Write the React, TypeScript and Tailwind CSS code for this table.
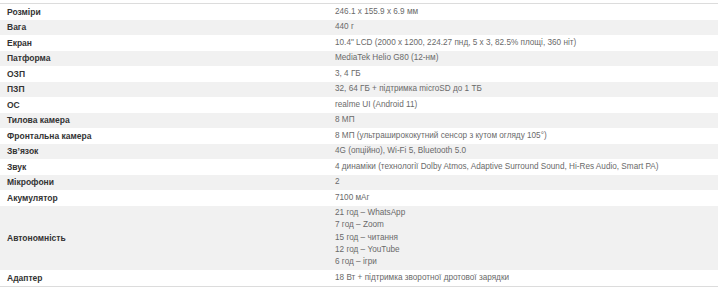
const specs: { label: string; value: string[] }[] = [
  { label: 'Розміри', value: ['246.1 x 155.9 x 6.9 мм'] },
  { label: 'Вага', value: ['440 г'] },
  { label: 'Екран', value: ['10.4" LCD (2000 x 1200, 224.27 пнд, 5 x 3, 82.5% площі, 360 ніт)'] },
  { label: 'Патформа', value: ['MediaTek Helio G80 (12-нм)'] },
  { label: 'ОЗП', value: ['3, 4 ГБ'] },
  { label: 'ПЗП', value: ['32, 64 ГБ + підтримка microSD до 1 ТБ'] },
  { label: 'ОС', value: ['realme UI (Android 11)'] },
  { label: 'Тилова камера', value: ['8 МП'] },
  { label: 'Фронтальна камера', value: ['8 МП (ультраширококутний сенсор з кутом огляду 105°)'] },
  { label: 'Зв’язок', value: ['4G (опційно), Wi-Fi 5, Bluetooth 5.0'] },
  { label: 'Звук', value: ['4 динаміки (технології Dolby Atmos, Adaptive Surround Sound, Hi-Res Audio, Smart PA)'] },
  { label: 'Мікрофони', value: ['2'] },
  { label: 'Акумулятор', value: ['7100 мАг'] },
  {
    label: 'Автономність',
    value: ['21 год – WhatsApp', '7 год – Zoom', '15 год – читання', '12 год – YouTube', '6 год – ігри'],
  },
  { label: 'Адаптер', value: ['18 Вт + підтримка зворотної дротової зарядки'] },
];

export default function App() {
  return (
    <div className="h-[287px] w-[720px] bg-white pt-[3px] font-['Liberation_Sans',Arial,sans-serif] text-[8.5px]">
      <div className="w-[718px] border-y border-[#dcdcdc]">
        {specs.map((s, i) => (
          <div
            key={s.label}
            className={`grid grid-cols-[328px_1fr] items-center py-[1.75px] leading-[12px] ${i % 2 === 1 ? 'bg-[#f1f1f1]' : 'bg-white'}`}
          >
            <div className="pl-[7px] font-bold text-[#333]">{s.label}</div>
            <div className="pl-[7px] text-[8.2px] text-[#6a6a6a]">
              {s.value.map((v) => (
                <div key={v} className={s.value.length > 1 ? 'leading-[12.2px]' : ''}>
                  {v}
                </div>
              ))}
            </div>
          </div>
        ))}
      </div>
    </div>
  );
}
